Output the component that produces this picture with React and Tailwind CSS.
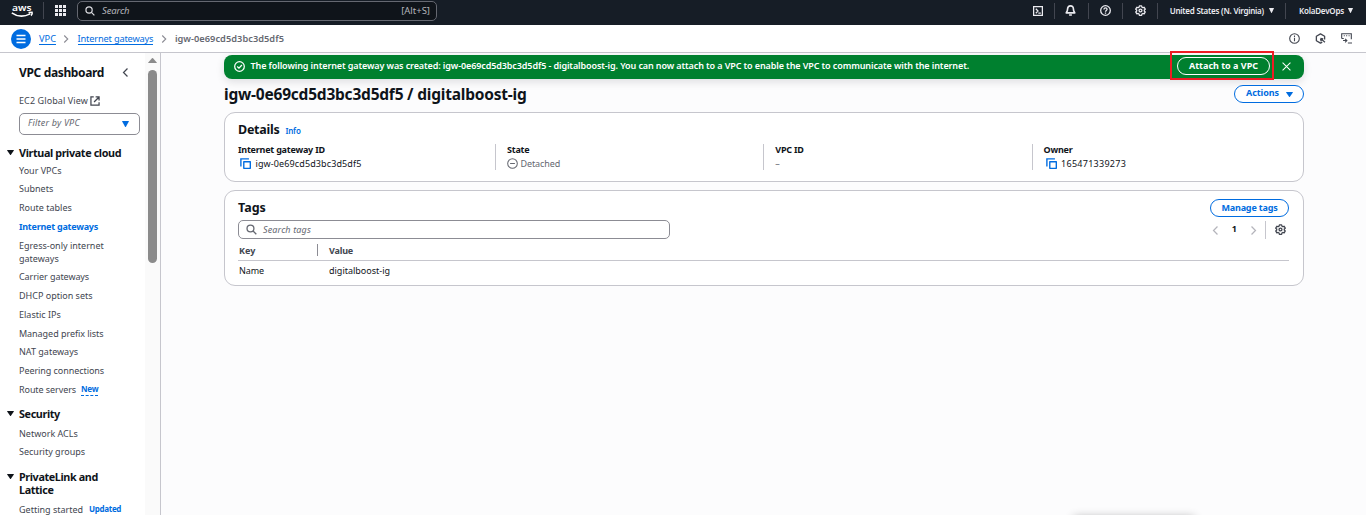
function T({ c = "", children }) {
  return <span className={"inline-block whitespace-nowrap " + c}>{children}</span>;
}

const Svg = ({ c, children, sw = "1.6", vb = "0 0 16 16" }) => (
  <svg viewBox={vb} className={"shrink-0 " + c} fill="none" stroke="currentColor" strokeWidth={sw}>{children}</svg>
);

const Gear = ({ c }) => (
  <Svg c={c} sw="1.9">
    <path strokeLinejoin="round" d="M6.4 1.2h3.2l.5 1.9 1.3.8 1.9-.6 1.6 2.8-1.4 1.3v1.4l1.4 1.3-1.6 2.8-1.9-.6-1.3.8-.5 1.9H6.4l-.5-1.9-1.3-.8-1.9.6-1.6-2.8 1.4-1.3V7.4L1.1 6.1l1.6-2.8 1.9.6 1.3-.8z" />
    <circle cx="8" cy="8" r="2.1" />
  </Svg>
);
const Search = ({ c }) => (
  <Svg c={c} sw="1.9"><circle cx="6.5" cy="6.5" r="5" /><path d="m10.3 10.3 4.7 4.7" /></Svg>
);
const Caret = ({ c }) => (
  <svg viewBox="0 0 8 6" preserveAspectRatio="none" className={"shrink-0 " + c} fill="currentColor"><path d="M.4 0h7.2q.5 0 .2.6L4.5 5.7q-.5.5-1 0L.2.6Q-.1 0 .4 0" /></svg>
);
const ChevR = ({ c }) => <Svg c={c} sw="2.2"><path d="m4.5 1 7 7-7 7" /></Svg>;
const ChevL = ({ c }) => <Svg c={c} sw="2.2"><path d="m11.5 1-7 7 7 7" /></Svg>;
const Copy = ({ c }) => (
  <Svg c={c} sw="2"><path strokeLinejoin="round" d="M5.5 5.5H15V15H5.5z" /><path d="M1.3 12.5V1.3H13" /></Svg>
);

function Item({ c = "", children }) {
  return <li className="flex h-[13px] items-center"><T c={c}>{children}</T></li>;
}

function Section({ children }) {
  return (
    <div className="-ml-[12px] flex h-[14px] items-center text-[10.8px] font-bold leading-[13px] tracking-[-0.38px] text-[#0f141a]">
      <Caret c="mr-[5px] h-[5px] w-[7px]" /><T>{children}</T>
    </div>
  );
}

const Sep = ({ c }) => <div className={"h-[16px] w-px shrink-0 bg-[#424650] " + c} />;

function TopBar() {
  return (
    <header className="flex h-[25px] shrink-0 items-start bg-[#161d26] text-white">
      <svg viewBox="0 0 24 18" className="ml-[11px] mt-[2px] h-[18px] w-[24px]">
        <text x="1" y="8.6" fontSize="9.5" fontWeight="600" fontFamily="Noto Sans, sans-serif" fill="#fff" textLength="19.5" lengthAdjust="spacingAndGlyphs">aws</text>
        <path d="M.8 10.8c5.5 4 12.5 4 18.4 1M17.500 10.600l3.600-.3c.4 1-.3 2.500-1.100 3.300" fill="none" stroke="#fff" strokeWidth="1.5" />
      </svg>
      <div className="ml-[8px] mt-[2px] h-[17px] w-px bg-[#424650]" />
      <svg viewBox="0 0 11 11" className="ml-[11px] mt-[5px] h-[11px] w-[11px]" fill="#ebebf0">
        {[0, 4, 8].map((y) => [0, 4, 8].map((x) => <rect key={x + "-" + y} x={x} y={y} width="3" height="3" />))}
      </svg>
      <div className="ml-[11px] mt-px flex h-[20px] w-[360px] items-center rounded-[5px] border border-[#656871] bg-[#0f141a] px-[7px] text-[9.5px]">
        <Search c="h-[10px] w-[10px] text-[#dedee3]" />
        <T c="ml-[7px] italic tracking-[-0.15px] text-[#b4b4bb]">Search</T>
        <T c="ml-auto mr-[-1px] text-[#b4b4bb]">[Alt+S]</T>
      </div>
      <div className="ml-auto flex h-[21px] items-center text-[#ebebf0]">
        <Svg c="h-[10px] w-[10px]" sw="2"><path d="M1 1h14v14H1zM4.5 4.5 8 8l-3.500 3.500M8.500 11.500h4" /></Svg>
        <Sep c="ml-[11px] mr-[10px]" />
        <Svg c="h-[11px] w-[11px]" sw="2.4"><path strokeLinejoin="round" d="M8 1.200c-3 0-4.200 2-4.200 4.300 0 3-1 4.300-2 6h12.400c-1-1.700-2-3-2-6 0-2.300-1.200-4.300-4.200-4.300zM6 14.500h4" /></Svg>
        <Sep c="ml-[12px] mr-[11px]" />
        <Svg c="h-[11px] w-[11px]" sw="1.9"><circle cx="8" cy="8" r="7" /><path d="M5.700 6.500c0-3 4.600-2.800 4.600-.2C10.300 8 8 7.800 8 9.800M8 11v1.800" /></Svg>
        <Sep c="ml-[11px] mr-[12px]" />
        <Gear c="h-[11px] w-[11px]" />
        <Sep c="ml-[11px] mr-[12px]" />
        <T c="text-[8px] font-semibold tracking-[-0.23px]">United States (N. Virginia)</T>
        <Caret c="ml-[5px] mb-px h-[5px] w-[5px]" />
        <Sep c="ml-[11px] mr-[13px]" />
        <T c="text-[8px] font-semibold tracking-[-0.2px]">KolaDevOps</T>
        <Caret c="ml-[4px] mr-[13px] mb-px h-[5px] w-[5px]" />
      </div>
    </header>
  );
}

function Crumbs() {
  return (
    <div className="flex h-[28px] shrink-0 items-center border-b border-[#c6c6cd] bg-white text-[9.25px] text-[#006ce0]">
      <div className="ml-[11px] flex h-[20px] w-[20px] items-center justify-center rounded-full bg-[#006ce0]">
        <Svg c="h-[10px] w-[10px] text-white" sw="1.5" vb="0 0 10 10"><path d="M.5 1.500h9M.5 5h9M.5 8.500h9" /></Svg>
      </div>
      <T c="ml-[8px] border-b border-[#006ce0] leading-[11px]">VPC</T>
      <ChevR c="ml-[6px] h-[8px] w-[8px] text-[#8c8c94]" />
      <T c="ml-[7.5px] border-b border-[#006ce0] leading-[11px] tracking-[-0.17px]">Internet gateways</T>
      <ChevR c="ml-[7px] h-[8px] w-[8px] text-[#8c8c94]" />
      <T c="ml-[6.5px] font-semibold leading-[12px] tracking-[0.03px] text-[#656871]">igw-0e69cd5d3bc3d5df5</T>
      <div className="ml-auto mr-[14px] flex items-center gap-[15px] text-[#424650]">
        <Svg c="h-[11px] w-[11px]" sw="1.6"><circle cx="8" cy="8" r="7" /><path d="M8 7v5M8 3.800v2" /></Svg>
        <Svg c="h-[11px] w-[11px]" sw="1.9"><path strokeLinejoin="round" d="M14 9.500V4.700L8 1.200 2 4.700v6.600l6 3.500 2.500-1.500M8 8l6.500 5.500M8 8l1 4M8 8l4 .5" /></Svg>
        <Svg c="h-[11px] w-[11px]" sw="1.6"><path d="M1 8V1h14v8M4 4h1.500M7.500 4H9M11 4h1.500M1 8h3M3 11h5M6 8.500 8.500 11 6 13.500M10 14.500h6" /></Svg>
      </div>
    </div>
  );
}

function Sidebar() {
  return (
    <aside className="flex w-[161px] shrink-0 border-r border-[#c6c6cd] bg-white">
      <div className="w-[145px] shrink-0 pl-[19px] text-[9px] text-[#424650]">
        <div className="mt-[11px] flex h-[18px] items-center text-[#0f141a]">
          <T c="text-[12px] font-bold tracking-[-0.35px]">VPC dashboard</T>
          <ChevL c="ml-auto mr-[15px] mb-[2px] h-[9px] w-[9px] text-[#424650]" />
        </div>
        <div className="mt-[12px] flex h-[13px] items-center">
          <T c="tracking-[0.1px]">EC2 Global View</T>
          <Svg c="ml-[2px] h-[10px] w-[10px]" sw="2"><path d="M6 1.500H1.500v13h13V10M9 1.500h5.500V7M14.500 1.500l-8 8" /></Svg>
        </div>
        <div className="mt-[6px] flex h-[22px] w-[121px] items-center rounded-[5px] border border-[#8c8c94] px-[8px]">
          <T c="-translate-y-px italic tracking-[0.2px] text-[#656871]">Filter by VPC</T>
          <Caret c="ml-auto mr-[2px] h-[6px] w-[7px] text-[#006ce0]" />
        </div>
        <div className="mt-[10px]"><Section>Virtual private cloud</Section></div>
        <ul className="mt-[5px] flex flex-col gap-[5.72px]">
          <Item>Your VPCs</Item>
          <Item>Subnets</Item>
          <Item>Route tables</Item>
          <Item c="font-bold tracking-[-0.24px] text-[#006ce0]">Internet gateways</Item>
          <li className="flex flex-col items-start">
            <T c="h-[13px] leading-[13px]">Egress-only internet</T>
            <T c="h-[13px] leading-[13px]">gateways</T>
          </li>
          <Item c="tracking-[-0.08px]">Carrier gateways</Item>
          <Item>DHCP option sets</Item>
          <Item>Elastic IPs</Item>
          <Item c="tracking-[-0.05px]">Managed prefix lists</Item>
          <Item>NAT gateways</Item>
          <Item c="tracking-[-0.06px]">Peering connections</Item>
          <li className="flex h-[13px] items-center">
            <T c="tracking-[-0.08px]">Route servers</T>
            <T c="ml-[5px] border-b border-dashed border-[#006ce0] text-[8px] font-bold leading-[12px] tracking-[-0.25px] text-[#006ce0]">New</T>
          </li>
        </ul>
        <div className="mt-[10.5px]"><Section>Security</Section></div>
        <ul className="mt-[6.5px] flex flex-col gap-[5.5px]">
          <Item>Network ACLs</Item>
          <Item>Security groups</Item>
        </ul>
        <div className="mt-[11px]"><Section>PrivateLink and</Section></div>
        <div className="flex h-[13px] items-center text-[10.8px] font-bold leading-[13px] tracking-[-0.38px] text-[#0f141a]"><T>Lattice</T></div>
        <div className="mt-[6.5px] flex h-[13px] items-center"><T>Getting started</T><T c="ml-[6px] text-[8px] font-bold tracking-[-0.32px] text-[#006ce0]">Updated</T></div>
      </div>
      <div className="flex w-[15px] flex-col items-center bg-[#fafafa] pt-[5px]">
        <Caret c="h-[5px] w-[9px] rotate-180 text-[#8b8b8b]" />
        <div className="mt-[7px] h-[193px] w-[9px] rounded-full bg-[#8b8b8b]" />
      </div>
    </aside>
  );
}

function Field({ label, divider, children }) {
  return (
    <div className={"h-[26px] w-[268.3px] text-[9px] leading-[13px] text-[#0f141a] " + (divider ? "border-l border-[#c6c6cd] pl-[11px]" : "")}>
      <div className="flex h-[13px] -translate-y-px items-center"><T c="font-bold tracking-[-0.22px]">{label}</T></div>
      <div className="flex h-[13px] items-center">{children}</div>
    </div>
  );
}

function Main() {
  return (
    <main className="relative flex-1 bg-[#fcfcfd] pl-[63px] pt-[2px]">
      <div className="flex h-[24px] w-[1080px] items-center rounded-[8px] bg-[#00802f] pb-[2px] text-[9px] font-semibold text-white shadow-[0_3px_8px_rgba(0,7,22,0.12)]">
        <Svg c="ml-[10px] h-[11px] w-[11px]" sw="1.8"><circle cx="8" cy="8" r="7" /><path d="m4.700 8 2.500 2.500 4.300-4.700" /></Svg>
        <T c="ml-[5.5px] tracking-[-0.105px]">The following internet gateway was created: igw-0e69cd5d3bc3d5df5 - digitalboost-ig. You can now attach to a VPC to enable the VPC to communicate with the internet.</T>
        <div className="ml-auto flex h-[18px] w-[93px] items-center justify-center rounded-full border border-white font-bold"><T>Attach to a VPC</T></div>
        <Svg c="ml-[12px] mr-[13px] h-[9px] w-[9px]" sw="1.8"><path d="m1 1 14 14M15 1 1 15" /></Svg>
      </div>
      <div className="mt-[6px] flex h-[18px] w-[1080px] items-center justify-between">
        <T c="translate-y-px text-[15.5px] font-bold tracking-[-0.215px] text-[#0f141a]">igw-0e69cd5d3bc3d5df5 / digitalboost-ig</T>
        <div className="flex h-[18px] w-[70px] items-center rounded-full border border-[#006ce0] bg-white pl-[11px] text-[9px] font-bold text-[#006ce0]">
          <T c="-translate-y-px tracking-[-0.06px]">Actions</T><Caret c="ml-[7px] h-[5px] w-[7px]" />
        </div>
      </div>
      <section className="mt-[9px] h-[70px] w-[1080px] rounded-[11px] border border-[#c6c6cd] bg-white pl-[13px]">
        <div className="mt-[8px] flex h-[18px] items-center">
          <T c="text-[12.5px] font-bold tracking-[-0.26px] text-[#0f141a]">Details</T>
          <T c="ml-[6px] mt-[2px] text-[8px] font-semibold tracking-[-0.2px] text-[#006ce0]">Info</T>
        </div>
        <div className="mt-[5px] flex">
          <div className="w-[257px]"><Field label="Internet gateway ID">
            <Copy c="ml-[2px] mr-[4.5px] h-[11px] w-[11px] text-[#006ce0]" /><T c="tracking-[0.118px]">igw-0e69cd5d3bc3d5df5</T>
          </Field></div>
          <Field label="State" divider>
            <Svg c="mr-[2.5px] h-[11px] w-[11px] text-[#656871]" sw="1.5"><circle cx="8" cy="8" r="7" /><path d="M4.500 8h7" /></Svg>
            <T c="tracking-[-0.1px] text-[#656871]">Detached</T>
          </Field>
          <Field label="VPC ID" divider><T c="text-[#656871]">–</T></Field>
          <Field label="Owner" divider>
            <Copy c="ml-[2px] mr-[4.5px] h-[11px] w-[11px] text-[#006ce0]" /><T c="tracking-[0.268px]">165471339273</T>
          </Field>
        </div>
      </section>
      <section className="mt-[8px] h-[96px] w-[1080px] rounded-[11px] border border-[#c6c6cd] bg-white px-[13px] text-[9px] text-[#0f141a]">
        <div className="mt-[8px] flex h-[18px] items-center justify-between">
          <T c="text-[12.5px] font-bold">Tags</T>
          <div className="mr-px flex h-[18px] w-[79px] items-center justify-center rounded-full border border-[#006ce0] font-bold text-[#006ce0]"><T c="tracking-[-0.18px]">Manage tags</T></div>
        </div>
        <div className="mt-[3px] flex h-[19px] items-center">
          <div className="flex h-[19px] w-[432px] items-center rounded-[5px] border border-[#8c8c94] pl-[7px]">
            <Search c="h-[11px] w-[11px] text-[#656871]" /><T c="ml-[6px] italic tracking-[0.146px] text-[#656871]">Search tags</T>
          </div>
          <ChevL c="ml-auto mt-px h-[9px] w-[9px] text-[#b4b4bb]" />
          <T c="ml-[12px] mr-[12px] -translate-y-px font-bold">1</T>
          <ChevR c="mt-px h-[9px] w-[9px] text-[#b4b4bb]" />
          <div className="ml-[7px] mr-[9px] h-[18px] w-px bg-[#c6c6cd]" />
          <Gear c="mr-[4px] h-[11px] w-[11px] text-[#424650]" />
        </div>
        <div className="mr-px flex h-[22px] items-center border-b border-[#c6c6cd] pl-px font-bold text-[#424650]">
          <div className="flex h-[12px] w-[79px] items-center border-r border-[#8c8c94]"><T c="translate-y-px">Key</T></div>
          <T c="ml-[11px] translate-y-px tracking-[-0.18px]">Value</T>
        </div>
        <div className="flex h-[20px] items-center pl-px">
          <div className="w-[90px]"><T c="tracking-[-0.1px]">Name</T></div>
          <T>digitalboost-ig</T>
        </div>
      </section>
      <div className="pointer-events-none absolute right-[172px] bottom-[-12px] h-[10px] w-[120px] shadow-[0_0_10px_rgba(0,0,0,0.3)]" />
      <div className="pointer-events-none absolute left-[1009px] top-[-2px] h-[29px] w-[104px] border-2 border-[#ed1c24]" />
    </main>
  );
}

export default function App() {
  return (
    <div className="flex h-[515px] w-[1366px] flex-col overflow-hidden font-['Noto_Sans',sans-serif]">
      <TopBar />
      <Crumbs />
      <div className="flex min-h-0 flex-1"><Sidebar /><Main /></div>
    </div>
  );
}
